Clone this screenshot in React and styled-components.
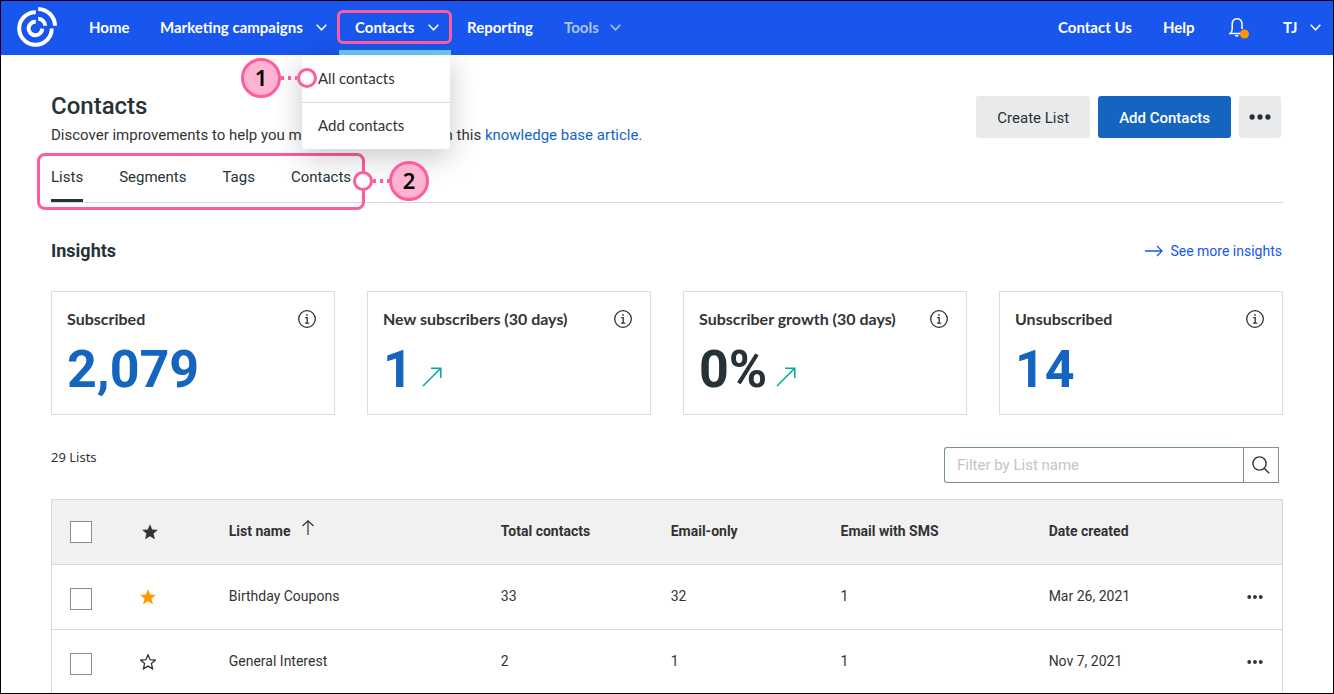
import React, { useState } from "react";
import styled, { createGlobalStyle } from "styled-components";

const GlobalStyle = createGlobalStyle`
    *{
        box-sizing: border-box;
    }
    body{
        margin: 0;
        background-color: #ffffff;
        color: #333333;
        font-family: Roboto, "Liberation Sans", sans-serif;
        font-size: 14px;
    }
    button, input{
        font-family: inherit;
        color: inherit;
    }
    a{
        text-decoration: none;
    }
`;

const cards = [
    { title: "Subscribed", value: "2,079", link: true },
    { title: "New subscribers (30 days)", value: "1", link: true, trend: true },
    { title: "Subscriber growth (30 days)", value: "0%", trend: true },
    { title: "Unsubscribed", value: "14", link: true },
];

const lists = [
    { name: "Birthday Coupons", total: 33, email: 32, sms: 1, created: "Mar 26, 2021", favorite: true },
    { name: "General Interest", total: 2, email: 1, sms: 1, created: "Nov 7, 2021", favorite: false },
];

const tabs = ["Lists", "Segments", "Tags", "Contacts"];

function Logo() {
    return (
        <svg width="42" height="42" viewBox="0 0 42 42" fill="none" stroke="#fff" strokeWidth="4" aria-hidden="true">
            <path d="M19.8 5.2A16.3 16.3 0 1 0 35.8 21.6" />
            <path d="M22.2 2A17 17 0 0 1 39 18.8" />
            <path d="M19.8 14.7A6.8 6.8 0 1 0 26.2 21.6" />
            <path d="M22.2 11.8A7.2 7.2 0 0 1 29.2 18.8" />
        </svg>
    );
}

function Chevron() {
    return (
        <svg width="11" height="7" viewBox="0 0 11 7" fill="none" stroke="currentColor" strokeWidth="1.5" aria-hidden="true">
            <path d="M.7.8l4.8 5 4.8-5" />
        </svg>
    );
}

function Bell() {
    return (
        <svg width="22" height="22" viewBox="0 0 22 22" fill="none" aria-hidden="true">
            <path d="M0 16.5h12M2 16.200c1-1.500 1.200-3 1.200-5V7.500C3.200 4 5 1.700 8 1.700s5 2.300 5 5.800V12" stroke="#fff" strokeWidth="1.500" />
            <path d="M6 18.800h3.500" stroke="#fff" strokeWidth="1.500" />
            <circle cx="15.500" cy="17" r="4.500" fill="#ff9800" />
        </svg>
    );
}

function Info() {
    return (
        <svg width="18" height="18" viewBox="0 0 18 18" fill="none" stroke="#263238" aria-hidden="true">
            <circle cx="9" cy="9" r="8.300" strokeWidth="1.300" />
            <path d="M7.300 7.700H9.200V13M7 13.200H11.200" strokeWidth="1.300" />
            <path d="M8.200 5H9.800" strokeWidth="1.600" />
        </svg>
    );
}

function Trend() {
    return (
        <svg width="20" height="20" viewBox="0 0 20 20" fill="none" stroke="#00a99d" strokeWidth="1.500" aria-hidden="true">
            <path d="M1 19L18.500 1.500M9 1.200H18.800V11" />
        </svg>
    );
}

function Star({ color, hollow }) {
    return (
        <svg width="16" height="16" viewBox="0 0 16 16" aria-hidden="true">
            <path
                d="M8 .8l2.100 4.900 5.300.4-4 3.500 1.200 5.300L8 12.100l-4.600 2.800 1.200-5.300-4-3.500 5.300-.4z"
                fill={hollow ? "none" : color}
                stroke={color}
                strokeWidth={hollow ? 1.3 : 0.4}
            />
        </svg>
    );
}

function Dots({ size }) {
    return (
        <svg width={size} height="6" viewBox={`0 0 ${size} 6`} fill="currentColor" aria-hidden="true">
            {[0, 1, 2].map((i) => (
                <circle key={i} cx={size / 2 + (i - 1) * size * 0.36} cy="3" r={size * 0.12} />
            ))}
        </svg>
    );
}

export default function App() {
    const [tab, setTab] = useState("Lists");
    const [filter, setFilter] = useState("");
    const shown = lists.filter((l) => l.name.toLowerCase().includes(filter.toLowerCase()));

    return (
        <>
            <GlobalStyle />
            <Frame>
                <Header>
                    <LogoLink href="#" aria-label="Home page"><Logo /></LogoLink>
                    <Nav>
                        <NavItem href="#" $width={71}>Home</NavItem>
                        <NavItem href="#" $width={195}>Marketing campaigns<Chevron /></NavItem>
                        <NavGroup>
                            <NavItem href="#" $width={112} $open>Contacts<Chevron /></NavItem>
                            <NavMark />
                            <Menu>
                                <MenuItem href="#">All contacts</MenuItem>
                                <MenuItem href="#">Add contacts</MenuItem>
                                <Callout $left={-61} $top={3}>
                                    <Badge>1</Badge><Dash /><Ring />
                                </Callout>
                            </Menu>
                        </NavGroup>
                        <NavItem href="#" $width={97}>Reporting</NavItem>
                        <NavItem href="#" $width={85} $dim>Tools<Chevron /></NavItem>
                    </Nav>
                    <UserNav>
                        <NavItem href="#" $width={105}>Contact Us</NavItem>
                        <NavItem href="#" $width={64}>Help</NavItem>
                        <BellButton aria-label="Notifications"><Bell /></BellButton>
                        <NavItem href="#" $width={66}>TJ<Chevron /></NavItem>
                    </UserNav>
                </Header>

                <Main>
                    <TitleRow>
                        <div>
                            <Title>Contacts</Title>
                            <Intro>
                                Discover improvements to help you manage your contacts in this <a href="#">knowledge base article.</a>
                            </Intro>
                        </div>
                        <Actions>
                            <Button>Create List</Button>
                            <Button $primary>Add Contacts</Button>
                            <Button $icon aria-label="More actions"><Dots size={22} /></Button>
                        </Actions>
                    </TitleRow>

                    <TabBar>
                        <TabGroup>
                            {tabs.map((name) => (
                                <Tab key={name} $active={name === tab} onClick={() => setTab(name)}>{name}</Tab>
                            ))}
                            <TabMark />
                            <Callout $left={302} $top={8}>
                                <Ring /><Dash /><Badge>2</Badge>
                            </Callout>
                        </TabGroup>
                    </TabBar>

                    <SectionHead>
                        <h2>Insights</h2>
                        <a href="#">
                            <svg width="18" height="12" viewBox="0 0 18 12" fill="none" stroke="currentColor" strokeWidth="1.300" aria-hidden="true">
                                <path d="M0 6h17M12 1l5 5-5 5" />
                            </svg>
                            See more insights
                        </a>
                    </SectionHead>

                    <Cards>
                        {cards.map((card) => (
                            <Card key={card.title}>
                                <CardHead>
                                    <h3>{card.title}</h3>
                                    <IconButton aria-label={`About ${card.title}`}><Info /></IconButton>
                                </CardHead>
                                <Value $link={card.link}>
                                    {card.value}
                                    {card.trend && <Trend />}
                                </Value>
                            </Card>
                        ))}
                    </Cards>

                    <Toolbar>
                        <Count>29 Lists</Count>
                        <Search onSubmit={(e) => e.preventDefault()}>
                            <input
                                type="text"
                                aria-label="Filter by List name"
                                placeholder="Filter by List name"
                                value={filter}
                                onChange={(e) => setFilter(e.target.value)}
                            />
                            <button type="submit" aria-label="Search">
                                <svg width="18" height="18" viewBox="0 0 18 18" fill="none" stroke="#333" strokeWidth="1.400" aria-hidden="true">
                                    <circle cx="7.500" cy="7.500" r="6.600" />
                                    <path d="M12.200 12.200l5 5" />
                                </svg>
                            </button>
                        </Search>
                    </Toolbar>

                    <Table>
                        <colgroup>
                            <Col $width="7.2%" />
                            <Col $width="7.2%" />
                            <Col $width="auto" />
                            <Col $width="13.8%" />
                            <Col $width="13.8%" />
                            <Col $width="16.9%" />
                            <Col $width="16.1%" />
                            <Col $width="2.9%" />
                        </colgroup>
                        <thead>
                            <tr>
                                <th><Check type="checkbox" aria-label="Select all lists" /></th>
                                <th><Star color="#333333" /></th>
                                <th>
                                    <Sort>
                                        List name
                                        <svg width="12" height="15" viewBox="0 0 12 15" fill="none" stroke="#333" strokeWidth="1.200" aria-hidden="true">
                                            <path d="M6 15V1M.5 6L6 .8 11.500 6" />
                                        </svg>
                                    </Sort>
                                </th>
                                <th>Total contacts</th>
                                <th>Email-only</th>
                                <th>Email with SMS</th>
                                <th>Date created</th>
                                <th />
                            </tr>
                        </thead>
                        <tbody>
                            {shown.map((list) => (
                                <tr key={list.name}>
                                    <td><Check type="checkbox" aria-label={`Select ${list.name}`} /></td>
                                    <td>
                                        <IconButton aria-label={`Favorite ${list.name}`}>
                                            <Star color={list.favorite ? "#ff9800" : "#333333"} hollow={!list.favorite} />
                                        </IconButton>
                                    </td>
                                    <td>{list.name}</td>
                                    <td>{list.total}</td>
                                    <td>{list.email}</td>
                                    <td>{list.sms}</td>
                                    <td>{list.created}</td>
                                    <td>
                                        <IconButton aria-label={`Actions for ${list.name}`}><Dots size={16} /></IconButton>
                                    </td>
                                </tr>
                            ))}
                        </tbody>
                    </Table>
                </Main>
            </Frame>
        </>
    );
}

const Frame = styled.div`
    height: 100vh;
    overflow: hidden;
    border: 1px solid #000000;
`;

const Header = styled.header`
    display: flex;
    align-items: center;
    height: 54px;
    padding-left: 15px;
    background-color: #1856ed;
`;

const LogoLink = styled.a`
    display: flex;
    margin-right: 15px;
`;

const Nav = styled.nav`
    display: flex;
`;

const UserNav = styled.nav`
    display: flex;
    align-items: center;
    margin-left: auto;
`;

const NavItem = styled.a`
    display: flex;
    align-items: center;
    justify-content: space-between;
    height: 54px;
    min-width: ${(p) => p.$width}px;
    padding: ${(p) => (p.$open ? "5px 12px 2px 16px" : "0 12px 2px 16px")};
    border-bottom: ${(p) => (p.$open ? "5px solid #67cdf8" : "0")};
    color: ${(p) => (p.$dim ? "#a9c6fb" : "#ffffff")};
    font-family: Lato, "Liberation Sans", sans-serif;
    font-size: 15px;
    font-weight: 700;
    white-space: nowrap;
`;

const NavGroup = styled.div`
    position: relative;
`;

const NavMark = styled.span`
    position: absolute;
    inset: 9px -1px 11px -2px;
    border: 3px solid #ff5ca0;
    border-radius: 6px;
    pointer-events: none;
`;

const Menu = styled.div`
    position: absolute;
    z-index: 2;
    top: 54px;
    right: 1px;
    width: 148px;
    background-color: #ffffff;
    border-radius: 2px;
    box-shadow: 0 8px 30px rgba(0, 0, 0, 0.22);
`;

const MenuItem = styled.a`
    display: flex;
    align-items: center;
    height: 47px;
    padding: 0 0 2px 16px;
    color: #333333;
    font-family: Lato, "Liberation Sans", sans-serif;
    font-size: 15px;
    & + &{
        border-top: 1px solid #d8dadb;
    }
`;

const Callout = styled.div`
    position: absolute;
    z-index: 3;
    left: ${(p) => p.$left}px;
    top: ${(p) => p.$top}px;
    display: flex;
    align-items: center;
    pointer-events: none;
`;

const Badge = styled.span`
    display: flex;
    align-items: center;
    justify-content: center;
    width: 40px;
    height: 40px;
    padding-bottom: 2px;
    border: 3px solid #ff5ca0;
    border-radius: 50%;
    background-color: #ffb3d2;
    color: #000000;
    font-family: "Noto Sans", sans-serif;
    font-size: 22px;
    font-weight: 600;
`;

const Dash = styled.span`
    width: 16px;
    height: 4px;
    background: repeating-linear-gradient(90deg, #ff5ca0 0 3px, transparent 3px 7px);
`;

const Ring = styled.span`
    width: 20px;
    height: 20px;
    border: 3px solid #ff5ca0;
    border-radius: 50%;
    background-color: #ffffff;
`;

const BellButton = styled.button`
    display: flex;
    padding: 0;
    margin: 0 16px 0 18px;
    border: none;
    background: none;
    cursor: pointer;
`;

const Main = styled.main`
    padding: 37px 50px 0;
`;

const TitleRow = styled.div`
    display: flex;
    justify-content: space-between;
    align-items: flex-start;
`;

const Title = styled.h1`
    margin: 0;
    color: #263238;
    font-size: 24px;
    line-height: 28px;
    font-weight: 500;
`;

const Intro = styled.p`
    margin: 4px 0 0;
    font-size: 15px;
    line-height: 22px;
    a{
        color: #1565c0;
    }
`;

const Actions = styled.div`
    display: flex;
    gap: 8px;
    padding: 4px 2px 0 0;
`;

const Button = styled.button`
    display: flex;
    align-items: center;
    justify-content: center;
    height: 42px;
    min-width: 42px;
    padding: ${(p) => (p.$icon ? "0" : "2px 21px 0")};
    border: none;
    border-radius: 3px;
    background-color: ${(p) => (p.$primary ? "#1565c0" : "#e9eaeb")};
    color: ${(p) => (p.$primary ? "#ffffff" : "#263238")};
    font-size: 15px;
    font-weight: ${(p) => (p.$primary ? 500 : 400)};
    cursor: pointer;
`;

const TabBar = styled.div`
    display: flex;
    margin-top: 7px;
    border-bottom: 1px solid #cfd8dc;
`;

const TabGroup = styled.div`
    position: relative;
    display: flex;
    gap: 36px;
`;

const Tab = styled.button`
    height: 49px;
    padding: 2px 0 0;
    border: none;
    border-bottom: 3px solid ${(p) => (p.$active ? "#263238" : "transparent")};
    background: none;
    color: #263238;
    font-size: 15px;
    cursor: pointer;
`;

const TabMark = styled.span`
    position: absolute;
    inset: 0 -14px -8px -14px;
    border: 3px solid #ff5ca0;
    border-radius: 8px;
    pointer-events: none;
`;

const SectionHead = styled.div`
    display: flex;
    align-items: center;
    justify-content: space-between;
    margin-top: 36px;
    padding-right: 1px;
    h2{
        margin: 0;
        color: #263238;
        font-size: 18px;
        line-height: 24px;
        font-weight: 700;
    }
    a{
        display: flex;
        align-items: center;
        gap: 7px;
        color: #1856ed;
        font-size: 14px;
    }
`;

const Cards = styled.div`
    display: grid;
    grid-template-columns: repeat(4, 1fr);
    gap: 32px;
    margin-top: 28px;
`;

const Card = styled.section`
    padding: 17px 18px 16px 15px;
    border: 1px solid #dcdddd;
`;

const CardHead = styled.div`
    display: flex;
    align-items: center;
    justify-content: space-between;
    h3{
        margin: 0;
        font-family: Lato, "Liberation Sans", sans-serif;
        font-size: 16px;
        line-height: 20px;
        font-weight: 700;
    }
`;

const IconButton = styled.button`
    display: flex;
    padding: 0;
    border: none;
    background: none;
    cursor: pointer;
`;

const Value = styled.div`
    display: flex;
    align-items: center;
    gap: 9px;
    margin-top: 13px;
    color: ${(p) => (p.$link ? "#1565c0" : "#263238")};
    font-size: 52px;
    line-height: 56px;
    font-weight: 700;
    svg{
        margin-top: 14px;
    }
`;

const Toolbar = styled.div`
    display: flex;
    justify-content: space-between;
    margin-top: 32px;
    padding-right: 4px;
`;

const Count = styled.span`
    font-family: "Noto Sans", sans-serif;
    font-size: 13px;
    line-height: 20px;
`;

const Search = styled.form`
    display: flex;
    width: 335px;
    height: 36px;
    input{
        flex: 1;
        min-width: 0;
        padding: 0 12px;
        border: 1px solid #78909c;
        border-right: none;
        border-radius: 3px 0 0 3px;
        font-size: 15px;
        outline: none;
    }
    input::placeholder{
        color: #c4c4c4;
    }
    button{
        display: flex;
        align-items: center;
        justify-content: center;
        width: 36px;
        padding: 0;
        border: 1px solid #8c8c8c;
        background-color: #ffffff;
        cursor: pointer;
    }
`;

const Table = styled.table`
    width: 100%;
    margin-top: 16px;
    table-layout: fixed;
    border-collapse: collapse;
    border: 1px solid #d8d8d8;
    tr{
        height: 65px;
        border-bottom: 1px solid #d8d8d8;
    }
    thead{
        background-color: #f1f1f1;
    }
    th, td{
        padding: 0 0 2px;
        text-align: left;
        font-size: 14px;
    }
    th:first-child{
        padding: 0 0 0 18px;
    }
    td:first-child{
        padding: 4px 0 0 18px;
    }
    th:nth-child(2){
        padding: 2px 0 0 2px;
    }
    td:nth-child(2), td:last-child{
        padding: 0;
    }
`;

const Col = styled.col`
    width: ${(p) => p.$width};
`;

const Sort = styled.span`
    display: flex;
    align-items: center;
    gap: 12px;
    svg{
        margin-bottom: 8px;
    }
`;

const Check = styled.input`
    appearance: none;
    display: block;
    width: 22px;
    height: 22px;
    margin: 0;
    border: 1px solid #8c8c8c;
    background-color: #ffffff;
    &:checked{
        background-color: #1565c0;
    }
`;
